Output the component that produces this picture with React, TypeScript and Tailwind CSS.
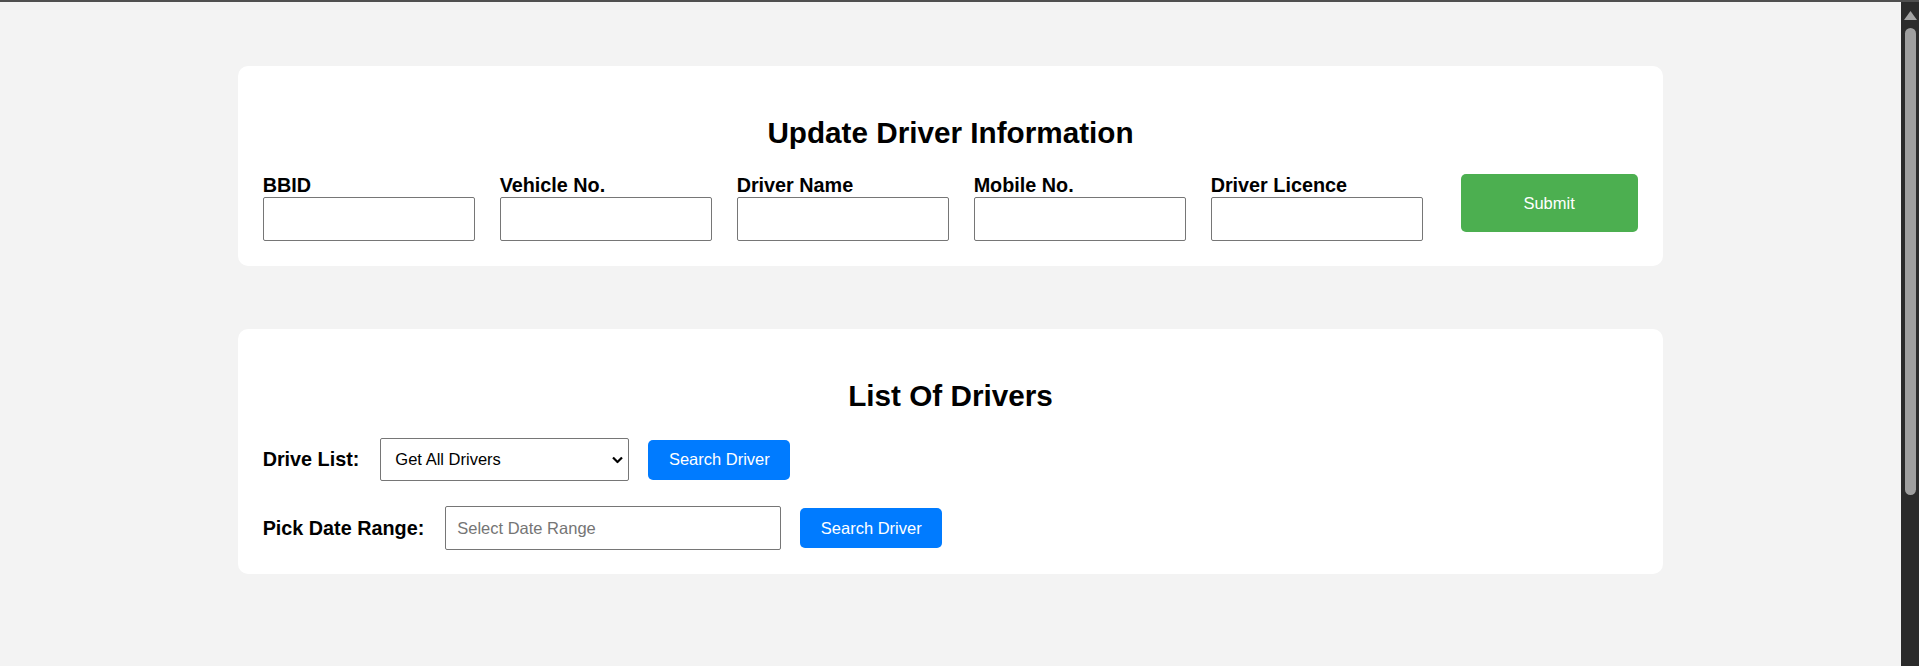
const fields = ["BBID", "Vehicle No.", "Driver Name", "Mobile No.", "Driver Licence"];

function Field({ label }: { label: string }) {
  return (
    <div className="flex w-[212px] flex-col">
      <label className="text-[19.8px] leading-[23px] font-bold text-black">{label}</label>
      <input
        type="text"
        className="h-[44px] w-full rounded-[2px] border border-[#767676] bg-white px-[10px] text-[16.5px] text-black outline-none"
      />
    </div>
  );
}

function SearchButton() {
  return (
    <button className="ml-[19px] h-[40px] w-[142px] rounded-[5px] bg-[#007bff] text-[16.5px] text-white">
      Search Driver
    </button>
  );
}

function Scrollbar() {
  return (
    <aside className="flex w-[18px] flex-col items-center bg-[#2b2b2b]">
      <svg width="13" height="9" viewBox="0 0 13 9" className="mt-[9px]">
        <polygon points="6.5,0 13,9 0,9" fill="#a3a3a3" />
      </svg>
      <div className="mt-[8px] ml-[1px] h-[467px] w-[11px] rounded-full bg-[#9f9f9f]" />
    </aside>
  );
}

export default function App() {
  return (
    <div className="flex h-screen flex-col overflow-hidden font-['Liberation_Sans',Arial,sans-serif] text-black">
      <div className="h-[2px] bg-[#4f4f4f]" />
      <div className="flex flex-1">
        <main className="flex-1 bg-[#f3f3f3] pt-[64px]">
          <section className="mx-auto w-3/4 rounded-[10px] bg-white px-[25px] pt-[50px] pb-[25px]">
            <h2 className="mb-[24px] text-center text-[29.7px] leading-[34px] font-bold">Update Driver Information</h2>
            <div className="flex items-start">
              <div className="flex gap-[25px]">
                {fields.map((f) => (
                  <Field key={f} label={f} />
                ))}
              </div>
              <button className="ml-[38px] h-[58px] w-[177px] rounded-[5px] bg-[#4caf50] text-[16.5px] text-white">
                Submit
              </button>
            </div>
          </section>

          <section className="mx-auto mt-[63px] w-3/4 rounded-[10px] bg-white px-[25px] pt-[50px] pb-[24px]">
            <h2 className="mb-[25px] text-center text-[29.7px] leading-[34px] font-bold">List Of Drivers</h2>
            <div className="flex items-center">
              <span className="mr-[21px] text-[19.8px] leading-[23px] font-bold">Drive List:</span>
              <div className="relative">
                <select className="h-[43px] w-[249px] appearance-none rounded-[2px] border border-[#767676] bg-white pl-[14px] text-[16.5px] text-black outline-none">
                  <option>Get All Drivers</option>
                  <option>Active Drivers</option>
                  <option>Inactive Drivers</option>
                </select>
                <svg
                  width="11"
                  height="7"
                  viewBox="0 0 11 7"
                  className="pointer-events-none absolute top-1/2 right-[6px] -translate-y-1/2"
                >
                  <path d="M1 1 L5.5 5.5 L10 1" fill="none" stroke="#000" strokeWidth="2.2" />
                </svg>
              </div>
              <SearchButton />
            </div>
            <div className="mt-[25px] flex items-center">
              <span className="mr-[21px] text-[19.8px] leading-[23px] font-bold">Pick Date Range:</span>
              <input
                type="text"
                placeholder="Select Date Range"
                className="h-[44px] w-[336px] rounded-[2px] border border-[#767676] bg-white pl-[11px] text-[16.5px] text-black outline-none placeholder:text-[#757575]"
              />
              <SearchButton />
            </div>
          </section>
        </main>
        <Scrollbar />
      </div>
    </div>
  );
}
